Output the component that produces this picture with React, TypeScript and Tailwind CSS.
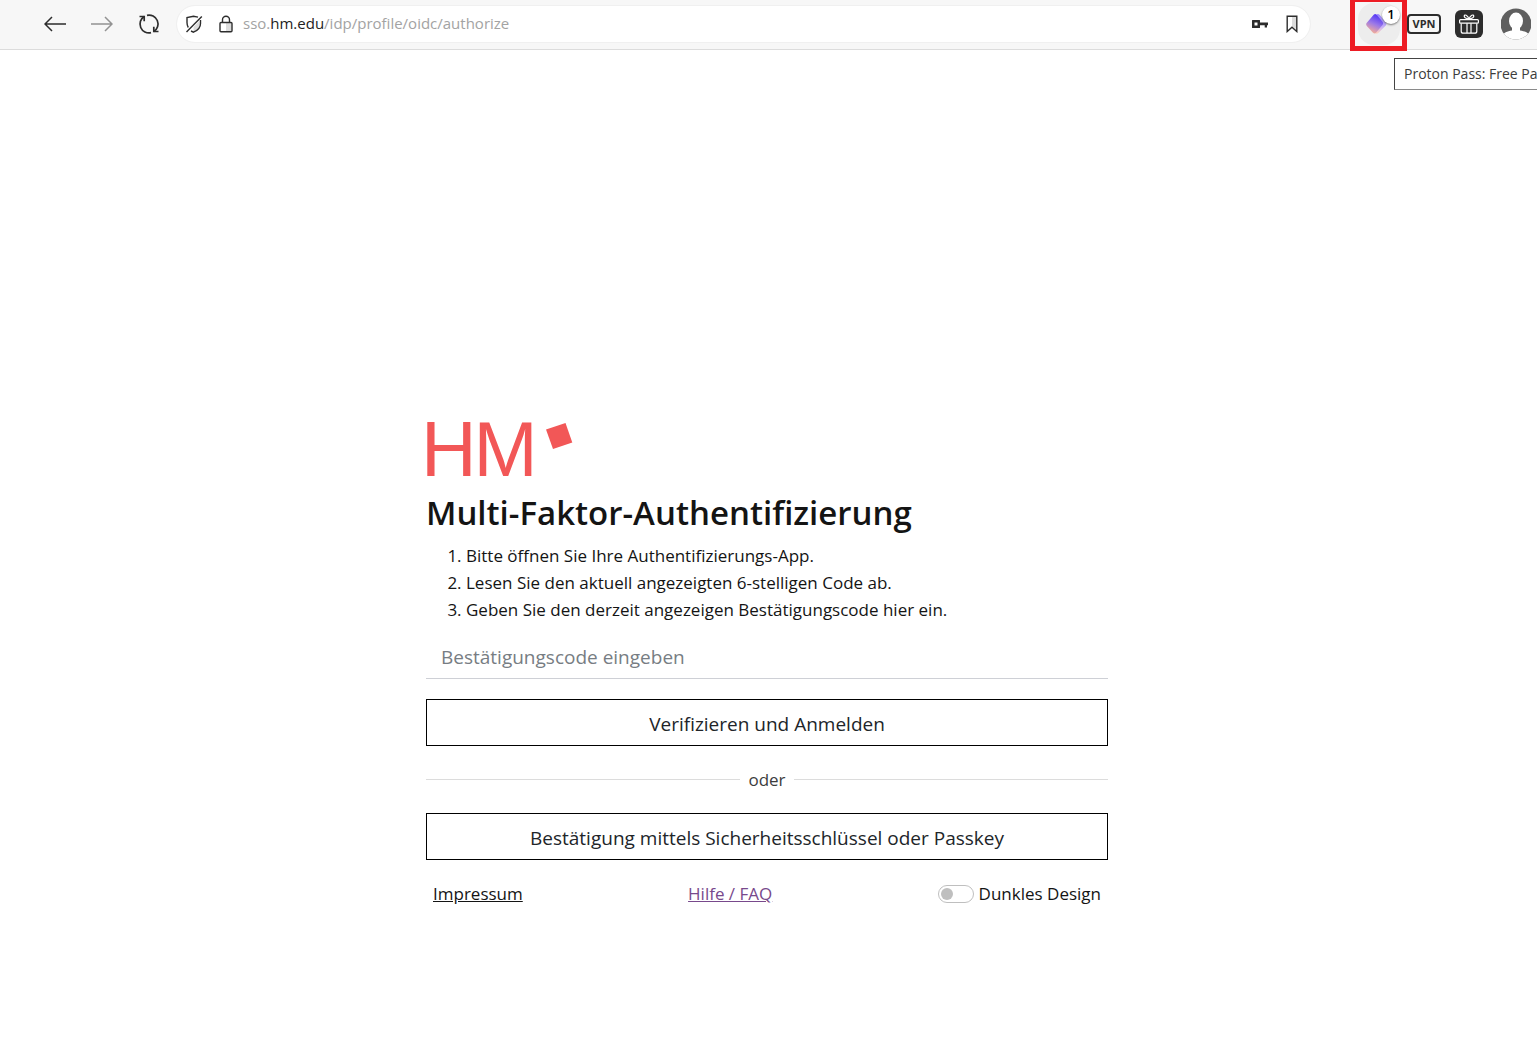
import { useState } from 'react';

function BackIcon() {
  return (
    <svg viewBox="0 0 22 16" className="w-[22px] h-4" fill="none" stroke="currentColor" strokeWidth="1.5">
      <path d="M22 8H1M8 1L1 8l7 7" />
    </svg>
  );
}

function ForwardIcon() {
  return (
    <svg viewBox="0 0 22 16" className="w-[22px] h-4" fill="none" stroke="currentColor" strokeWidth="1.5">
      <path d="M0 8h21M14 1l7 7-7 7" />
    </svg>
  );
}

function ReloadIcon() {
  return (
    <svg viewBox="0 0 22 22" className="size-[22px]" fill="none" stroke="currentColor" strokeWidth="1.7">
      <path d="M9 2.300A8.900 8.900 0 0 1 15.800 18.500M13 19.700A8.900 8.900 0 0 1 6.200 3.500" />
      <path d="M1.500 3.500h4.700v4.700M20.500 18.500h-4.700v-4.700" />
    </svg>
  );
}

function ShieldOffIcon() {
  return (
    <svg viewBox="0 0 18 20" className="w-[18px] h-5" fill="none" stroke="currentColor" strokeWidth="1.4">
      <path d="M14.500 7v3c0 4-2.200 6-6 7.800V13z" fill="#dcdcdc" stroke="none" />
      <path d="M3.300 13.500C2.300 12 2 10.500 2 8.500V3.600l6.500-1.400 4.500.9M15.500 6v3.500c0 4.300-2.700 7-7 8.700l-2.500-1.200" />
      <path d="M16.800 2.500L1.500 18" />
    </svg>
  );
}

function LockIcon() {
  return (
    <svg viewBox="0 0 14 18" className="w-[14px] h-[18px]" fill="none" stroke="currentColor" strokeWidth="1.4">
      <path d="M7 8h5.500v8.500H7z" fill="#dcdcdc" stroke="none" />
      <path d="M3.500 7.500V4.700a3.500 3.500 0 0 1 7 0v2.800" />
      <rect x="1" y="7.500" width="12" height="9.300" rx="1" />
    </svg>
  );
}

function KeyIcon() {
  return (
    <svg viewBox="0 0 16 8" className="w-4 h-2" fill="currentColor">
      <path fillRule="evenodd" d="M.5 0h7q.5 0 .5.5v2h8v2.800h-1V7.500h-2.300V5.300H8v2.200q0 .5-.5.5h-7Q0 8 0 7.500v-7Q0 0 .5 0zM2.500 2.500v3h3v-3z" />
    </svg>
  );
}

function BookmarkIcon() {
  return (
    <svg viewBox="0 0 12 18" className="w-3 h-[18px]" fill="none" stroke="currentColor" strokeWidth="1.400">
      <path d="M6 1.500h4.500v13L6 11z" fill="#dcdcdc" stroke="none" />
      <path d="M1.200 1.200h9.600v15.300L6 12.200l-4.800 4.300z" />
    </svg>
  );
}

function ProtonPassIcon() {
  return (
    <svg viewBox="0 0 22 22" className="size-[22px]">
      <defs>
        <linearGradient id="pass-front" x1="0.7" y1="0" x2="0.3" y2="1">
          <stop offset="0.1" stopColor="#5b3df5" />
          <stop offset="0.5" stopColor="#9a78e8" />
          <stop offset="1" stopColor="#ffb48f" />
        </linearGradient>
        <linearGradient id="pass-back" x1="0.6" y1="0" x2="0.300" y2="1">
          <stop offset="0" stopColor="#8f7dff" />
          <stop offset="0.6" stopColor="#c9b2f5" />
          <stop offset="1" stopColor="#ffd0bd" />
        </linearGradient>
      </defs>
      <path d="M10.500 1.500q1.500-1 3 .3l6.500 7.500q1 1.500 0 3l-7.500 7.500q-1.700 1.700-3.500.5z" fill="url(#pass-back)" />
      <path d="M7.700 1.800q1.500-1.400 3 0l5.800 7q1.200 1.600 0 3.200l-6.500 7.800q-1.500 1.400-3 0L.8 13q-1.300-1.700 0-3.200z" fill="url(#pass-front)" />
    </svg>
  );
}

function GiftIcon() {
  return (
    <svg viewBox="0 0 28 28" className="size-7" fill="none">
      <rect width="28" height="28" rx="6" fill="#2d2d2d" />
      <g stroke="#fff" strokeWidth="1.200">
        <rect x="4.600" y="9.600" width="18.800" height="3.600" rx="1" />
        <path d="M6.200 13.500v7.700q0 2 2 2h11.600q2 0 2-2v-7.700M12 13.200v10M16 13.200v10" />
        <path d="M14 9C12.500 5 9.500 4 9.200 6c-.1 1.600 1.800 2.500 4.800 3zM14 9c1.500-4 4.500-5 4.800-3 .1 1.600-1.800 2.500-4.800 3z" />
      </g>
    </svg>
  );
}

function AvatarIcon() {
  return (
    <svg viewBox="0 0 30 32" className="w-[30px] h-8">
      <defs>
        <clipPath id="avatar-clip">
          <circle cx="15" cy="16" r="15.500" />
        </clipPath>
      </defs>
      <g clipPath="url(#avatar-clip)">
        <rect width="30" height="32" fill="#5f5f5f" />
        <ellipse cx="15" cy="13" rx="7" ry="8.500" fill="#fff" />
        <path d="M11 18h8v4.500c5 .6 8.500 2.500 9.500 5V32h-27v-4.500c1-2.500 4.500-4.400 9.500-5z" fill="#fff" />
      </g>
    </svg>
  );
}

function BrowserBar() {
  return (
    <header className="flex items-center h-[50px] pl-11 pr-1.5 pb-0.5 bg-[#f7f7f7] border-b border-[#dcdcdc] text-[#2d2d2d]">
      <nav className="flex items-center gap-[25px] mr-[17px]">
        <button type="button" aria-label="Back">
          <BackIcon />
        </button>
        <button type="button" aria-label="Forward" className="text-[#939393]">
          <ForwardIcon />
        </button>
        <button type="button" aria-label="Reload">
          <ReloadIcon />
        </button>
      </nav>

      <div className="flex items-center flex-1 h-9 px-2 bg-white rounded-full outline outline-[#f0f0f0]">
        <ShieldOffIcon />
        <span className="ml-4">
          <LockIcon />
        </span>
        <p className="flex-1 ml-2.5 text-[15px] text-[#a3a3a3]">
          sso.<span className="text-[#222222]">hm.edu</span>/idp/profile/oidc/authorize
        </p>
        <div className="flex items-center gap-[18px] pr-1">
          <KeyIcon />
          <BookmarkIcon />
        </div>
      </div>

      <div className="flex items-center ml-10">
        <button
          type="button"
          aria-label="Proton Pass"
          className="relative flex items-center justify-center w-[57px] h-[54px] border-5 border-[#ed1c24]"
        >
          <span className="flex items-center justify-center size-[42px] pr-1 bg-[#ededed] rounded-2xl">
            <ProtonPassIcon />
          </span>
          <span className="absolute top-1 right-0.5 flex items-center justify-center size-[18px] bg-white rounded-full shadow-[0_1px_2px_#777] text-[13px] font-semibold text-black">
            1
          </span>
        </button>
        <button type="button" className="w-[34px] h-5 border-2 border-[#2d2d2d] rounded text-[11px] leading-4 font-bold">
          VPN
        </button>
        <button type="button" aria-label="Gift" className="ml-3.5">
          <GiftIcon />
        </button>
        <button type="button" aria-label="Profile" className="ml-[18px]">
          <AvatarIcon />
        </button>
      </div>
    </header>
  );
}

function Logo() {
  return (
    <div className="relative flex w-[148px] h-14 font-['Liberation_Sans',Arial,sans-serif] text-[77px] leading-[54px] text-[#f25757]">
      <span className="-ml-[5px]">H</span>
      <span className="-ml-[3px]">M</span>
      <svg viewBox="0 0 28 28" className="absolute top-0 right-0 size-7" fill="currentColor">
        <path d="M0 7.500L19.500 1l6.800 19.500L7 27z" />
      </svg>
    </div>
  );
}

const steps = [
  'Bitte öffnen Sie Ihre Authentifizierungs-App.',
  'Lesen Sie den aktuell angezeigten 6-stelligen Code ab.',
  'Geben Sie den derzeit angezeigen Bestätigungscode hier ein.',
];

const buttonStyle = 'w-full h-[47px] pt-1 border border-black text-[19px] text-[#212529]';

export default function App() {
  const [code, setCode] = useState('');
  const [dark, setDark] = useState(false);

  return (
    <div className="relative min-h-screen overflow-x-clip bg-white font-['Open_Sans',sans-serif] text-[17px] leading-[27px] text-[#141414]">
      <BrowserBar />

      <div
        role="tooltip"
        className="absolute top-[58px] right-0 w-[143px] h-8 pl-[9px] overflow-hidden border border-r-0 border-[#444444] border-b-[#8a8a8a] bg-white text-sm leading-[30px] text-[#3c3c3c] whitespace-nowrap"
      >
        Proton Pass: Free Pa
      </div>

      <main className="pt-[372px] pr-[3px]">
        <form className="max-w-[682px] mx-auto" onSubmit={(e) => e.preventDefault()}>
          <Logo />
          <h1 className="mt-[15px] text-[33px] leading-10 font-semibold">
            Multi-Faktor-Authentifizierung
          </h1>

          <ol className="mt-[9px] pl-10 list-decimal">
            {steps.map((step) => (
              <li key={step}>{step}</li>
            ))}
          </ol>

          <input
            type="text"
            aria-label="Bestätigungscode"
            placeholder="Bestätigungscode eingeben"
            value={code}
            onChange={(e) => setCode(e.target.value)}
            className="block w-full h-11 mt-3 px-[15px] border-b border-[#ced0d6] text-[19px] placeholder:text-[#777d83]"
          />

          <button type="submit" className={`${buttonStyle} mt-5`}>
            Verifizieren und Anmelden
          </button>

          <div className="flex items-center gap-2 my-5 text-[#3d3d3d]">
            <span className="flex-1 h-px bg-[#dcdcdc]"></span>
            oder
            <span className="flex-1 h-px bg-[#dcdcdc]"></span>
          </div>

          <button type="button" className={buttonStyle}>
            Bestätigung mittels Sicherheitsschlüssel oder Passkey
          </button>

          <footer className="flex items-center justify-between mt-5 px-[7px]">
            <a href="#impressum" className="underline">
              Impressum
            </a>
            <a href="#hilfe" className="underline text-[#78498c]">
              Hilfe / FAQ
            </a>
            <label className="flex items-center gap-[5px]">
              <input
                type="checkbox"
                role="switch"
                checked={dark}
                onChange={(e) => setDark(e.target.checked)}
                className="appearance-none flex items-center w-9 h-[18px] px-0.5 border border-[#bfbfbf] rounded-full before:size-3 before:rounded-full before:bg-[#bfbfbf] checked:justify-end"
              />
              Dunkles Design
            </label>
          </footer>
        </form>
      </main>
    </div>
  );
}
